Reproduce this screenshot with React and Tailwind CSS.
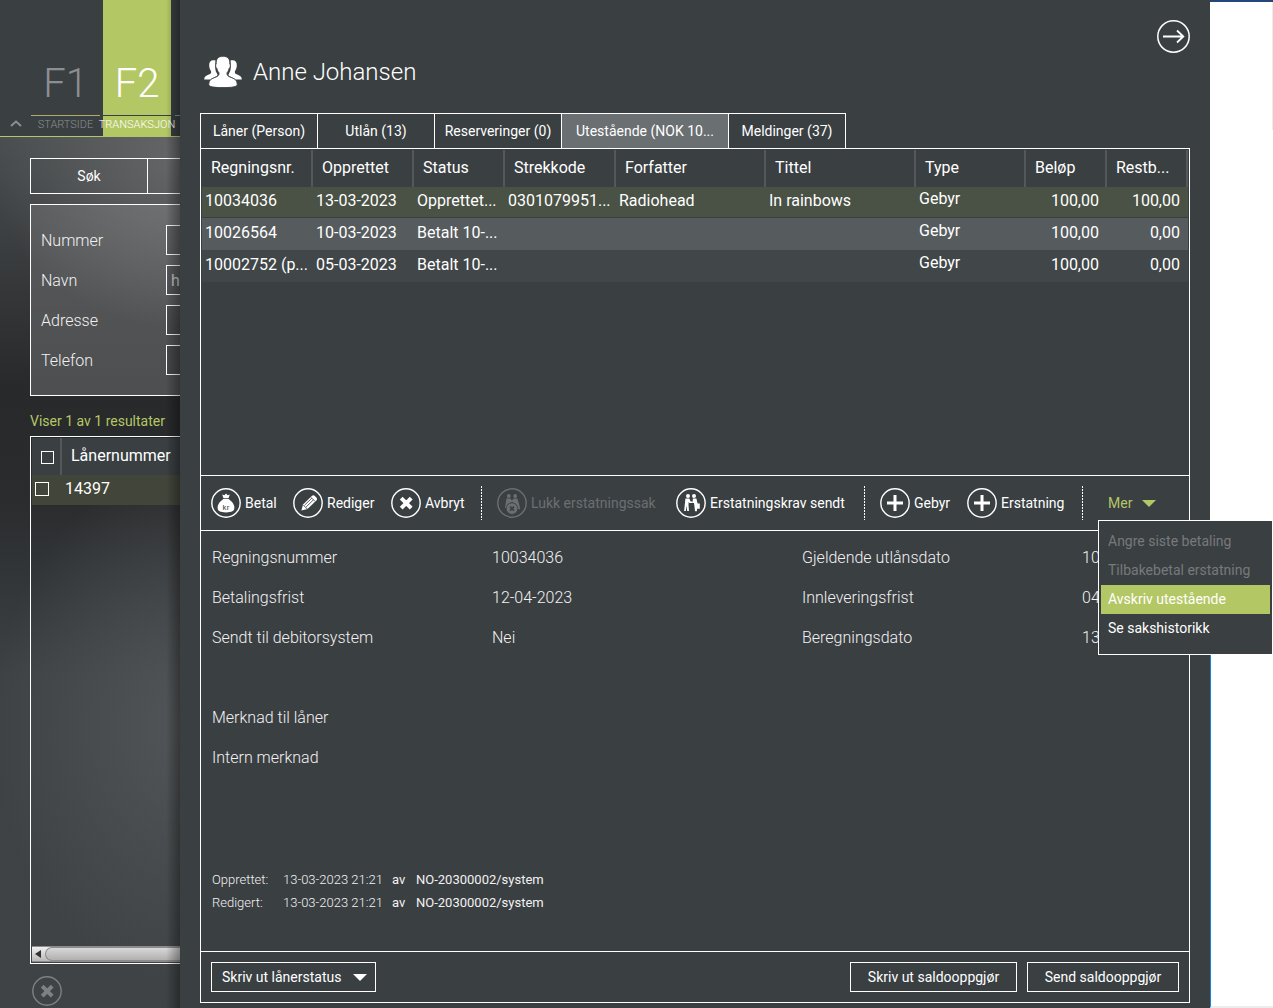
import { useState } from 'react';

const TABS = [
  { id: 'patron', label: 'Låner (Person)', width: 'w-[118px]' },
  { id: 'loans', label: 'Utlån (13)', width: 'w-[118px]' },
  { id: 'reservations', label: 'Reserveringer (0)', width: 'w-[128px]' },
  { id: 'debts', label: 'Utestående (NOK 10...', width: 'w-[168px]' },
  { id: 'messages', label: 'Meldinger (37)', width: 'w-[118px]' },
];

const COLUMNS = [
  { label: 'Regningsnr.', width: 'w-[111px]' },
  { label: 'Opprettet', width: 'w-[101px]' },
  { label: 'Status', width: 'w-[91px]' },
  { label: 'Strekkode', width: 'w-[111px]' },
  { label: 'Forfatter', width: 'w-[150px]' },
  { label: 'Tittel', width: 'w-[150px]' },
  { label: 'Type', width: 'w-[110px]' },
  { label: 'Beløp', width: 'w-[81px]' },
  { label: 'Restb...', width: 'w-[81px]' },
];

const BILLS = [
  {
    id: '10034036',
    cells: ['13-03-2023', 'Opprettet...', '0301079951...', 'Radiohead', 'In rainbows'],
    amount: '100,00',
    rest: '100,00',
    row: 'h-[31px] bg-[#4a5145] [&>td]:border-b [&>td]:border-[#3a3f42]',
  },
  {
    id: '10026564',
    cells: ['10-03-2023', 'Betalt 10-...', '', '', ''],
    amount: '100,00',
    rest: '0,00',
    row: 'h-8 bg-[#565b5e]',
  },
  {
    id: '10002752 (p...',
    cells: ['05-03-2023', 'Betalt 10-...', '', '', ''],
    amount: '100,00',
    rest: '0,00',
    row: 'h-8 bg-[#414648]',
  },
];

const DETAILS = [
  ['Regningsnummer', '10034036', 'Gjeldende utlånsdato', '10'],
  ['Betalingsfrist', '12-04-2023', 'Innleveringsfrist', '04'],
  ['Sendt til debitorsystem', 'Nei', 'Beregningsdato', '13'],
  ['', '', '', ''],
  ['Merknad til låner', '', '', ''],
  ['Intern merknad', '', '', ''],
];

const MENU = [
  { label: 'Angre siste betaling', disabled: true },
  { label: 'Tilbakebetal erstatning', disabled: true },
  { label: 'Avskriv utestående', active: true },
  { label: 'Se sakshistorikk' },
];

const SEARCH_FIELDS = [
  { id: 'nummer', label: 'Nummer', value: '' },
  { id: 'navn', label: 'Navn', value: 'h' },
  { id: 'adresse', label: 'Adresse', value: '' },
  { id: 'telefon', label: 'Telefon', value: '' },
];

function CircleIcon({ children }) {
  return (
    <svg viewBox="0 0 30 30" className="h-[30px] w-[30px] shrink-0" fill="currentColor" aria-hidden="true">
      <circle cx="15" cy="15" r="14.2" fill="none" stroke="currentColor" strokeWidth="1.4" />
      {children}
    </svg>
  );
}

function MoneyBagIcon() {
  return (
    <CircleIcon>
      <path d="M11.2 6.4l2.200.8L15 5.400l1.600 1.800 2.200-.8-1.300 3.800h-5z" />
      <path d="M12.4 11h5.200c2.600 2 5.800 4.800 5.800 8.600 0 3.200-2.200 4.800-8.400 4.800s-8.400-1.600-8.400-4.800c0-3.800 3.200-6.600 5.800-8.600z" />
      <text x="15" y="22" fontSize="8" fontFamily="Roboto, sans-serif" textAnchor="middle" fill="#3a3f42">
        kr
      </text>
    </CircleIcon>
  );
}

function PencilIcon() {
  return (
    <CircleIcon>
      <path d="M8.400 22.600l1.600-6 8.800-8.600c1-.9 2.200-.8 3.100 0l1.500 1.500c.8.900.8 2 0 2.900l-8.900 8.700z" />
      <path d="M11.600 17.200l7.200-7M13.200 18.900l7.400-7.200" stroke="#3a3f42" strokeWidth=".8" fill="none" />
      <path d="M17.900 9.300l4.200 4.200M10.300 17l4 4" stroke="#3a3f42" strokeWidth=".8" fill="none" />
    </CircleIcon>
  );
}

function CrossIcon() {
  return (
    <CircleIcon>
      <path d="M10.200 10.200l10 10M20.200 10.200l-10 10" stroke="currentColor" strokeWidth="4" fill="none" />
    </CircleIcon>
  );
}

function PlusIcon() {
  return (
    <CircleIcon>
      <path d="M15 7v16M7 15h16" stroke="currentColor" strokeWidth="3" fill="none" />
    </CircleIcon>
  );
}

function CloseCaseIcon() {
  return (
    <CircleIcon>
      <circle cx="11.800" cy="8" r="1.900" />
      <circle cx="18.200" cy="8" r="1.900" />
      <path d="M9.400 10.600h4l1.600 2 1.600-2h3.800l1.600 5 1.200 5.400-2.200.6-1.600-5.200-4.400-2.400-4.400 2.400-.6 3.600H8z" />
      <circle cx="15" cy="20.600" r="5.800" stroke="#3a3f42" strokeWidth=".8" />
      <path d="M13 18.600l4 4M17 18.600l-4 4" stroke="#3a3f42" strokeWidth="1.800" fill="none" />
    </CircleIcon>
  );
}

function HandshakeIcon() {
  return (
    <CircleIcon>
      <circle cx="12" cy="8" r="2" />
      <circle cx="18" cy="8" r="2" />
      <path d="M9.400 10.400h4l1.200 3.200h1.600v1.400h-2.800l-.7-1.200-.2 3 .5 6.200h-1.800l-.9-5.400-.4 5.400H8.100l.8-7.600z" />
      <path d="M16.800 10.400h3.600l1.200 5h2.200v5.400h-2.700l-.2 2.400H19l-.5-4.600-.5-3.600h-1.800v-1.400h.6z" />
    </CircleIcon>
  );
}

function PeopleIcon() {
  return (
    <svg viewBox="0 0 38 32" className="h-8 w-[38px]" fill="currentColor" aria-hidden="true">
      <path d="M11.500 4.600C7 3.600 5 5.800 5.200 9.400c.1 2.600.8 4.200 1.800 5.600.6 1.800-.2 2.800-2.200 3.600C1.600 19.800.2 20.800.2 23.600h6.400c1.400-1.600 4-2.400 6-3.400 1.200-.8 1-1.800.4-2.800-2-2.400-2-6-1.500-12.800z" />
      <path d="M26.500 4.600c4.500-1 6.500 1.200 6.300 4.800-.1 2.600-.8 4.200-1.800 5.600-.6 1.800.2 2.800 2.200 3.600 3.200 1.200 4.600 2.200 4.600 5h-6.400c-1.400-1.600-4-2.400-6-3.400-1.200-.8-1-1.800-.4-2.800 2-2.400 2-6 1.500-12.800z" />
      <path
        d="M19 .2c4.800 0 7.200 3 6.800 7.800 1 .6.700 3.600-.7 4.400-.4 2-1.100 3.200-2 4.200-.4 2.400.3 3.400 2.900 4.400 4.800 1.800 7.200 3 7.200 7.600 0 2.200-4.800 3-14.200 3s-14.200-.8-14.200-3c0-4.600 2.400-5.800 7.200-7.600 2.600-1 3.300-2 2.900-4.400-.9-1-1.600-2.200-2-4.200-1.400-.8-1.700-3.800-.7-4.400C11.800 3.200 14.200.2 19 .2z"
        stroke="#3a3f42"
        strokeWidth=".9"
      />
    </svg>
  );
}

function Triangle() {
  return (
    <svg viewBox="0 0 14 7" className="h-[7px] w-[14px]" fill="currentColor" aria-hidden="true">
      <path d="M0 0h14L7 7z" />
    </svg>
  );
}

function ToolButton({ icon, label, width, disabled }) {
  return (
    <button
      type="button"
      disabled={disabled}
      className={`flex shrink-0 items-center gap-1 whitespace-nowrap text-white disabled:text-[#6b6f72] ${width}`}
    >
      {icon}
      {label}
    </button>
  );
}

function ToolDivider() {
  return (
    <div className="h-[34px] w-px shrink-0 bg-[repeating-linear-gradient(to_bottom,white_0,white_2px,transparent_2px,transparent_3px)]" />
  );
}

function FunctionKeys() {
  return (
    <nav className="flex h-[137px] items-end border-b border-[#b4c765] bg-[#3a3f42] font-light">
      <button type="button" aria-label="Skjul meny" className="flex h-[25px] w-[31px] shrink-0 items-center justify-center text-[#8c8f91]">
        <svg viewBox="0 0 12 7" className="h-[7px] w-3" fill="none" stroke="currentColor" strokeWidth="2" aria-hidden="true">
          <path d="M1 6l5-4.500L11 6" />
        </svg>
      </button>
      <a href="#startside" className="flex w-[69px] shrink-0 flex-col items-center text-[#8c8f91]">
        <span className="text-[40px] leading-[62px]">F1</span>
        <span className="h-[21px] w-full border-t border-[#b5a96a] text-center text-[11px] leading-[17px]">STARTSIDE</span>
      </a>
      <a href="#transaksjon" className="ml-[3px] flex h-full w-[68px] shrink-0 flex-col items-center justify-end bg-[#b4c765] text-white">
        <span className="text-[40px] leading-[62px]">F2</span>
        <span className="flex h-[21px] w-full justify-center border-t border-[#3a3f42] text-[11px] leading-[17px]">TRANSAKSJON</span>
      </a>
      <div className="ml-1 h-[21px] flex-1 border-t border-[#6fa0a0]" />
    </nav>
  );
}

function SearchPanel() {
  return (
    <aside className="relative flex w-[180px] shrink-0 flex-col overflow-hidden">
      <FunctionKeys />
      <div className="flex flex-1 flex-col bg-[radial-gradient(ellipse_190px_170px_at_180px_20px,#646668,transparent),radial-gradient(ellipse_190px_260px_at_185px_590px,#525557,transparent),linear-gradient(#4a4d4f_0%,#27292b_29%,#2a2c2e_42%,#3e4245_62%,#3f4345_100%)] pt-[21px] pl-[30px]">
        <div className="flex h-9 shrink-0 border border-r-0 border-white text-sm text-white">
          <button type="button" className="w-[117px] border-r border-white">
            Søk
          </button>
          <button type="button" aria-label="Nullstill" className="flex-1" />
        </div>

        <form className="mt-[10px] flex h-48 shrink-0 flex-col gap-[10px] border border-r-0 border-white bg-linear-to-b from-white/12 to-white/18 pt-5 pl-[10px] font-light text-[#f2f2f2]">
          {SEARCH_FIELDS.map((field) => (
            <div key={field.id} className="flex h-[30px] items-center">
              <label htmlFor={field.id} className="w-[125px] shrink-0 pt-[2px]">
                {field.label}
              </label>
              <input
                id={field.id}
                defaultValue={field.value}
                className="h-[30px] w-[180px] shrink-0 border border-white bg-black/10 px-1 font-normal text-[#c5c7c8]"
              />
            </div>
          ))}
        </form>

        <p className="mt-[15px] text-sm text-[#b4c765]">Viser 1 av 1 resultater</p>

        <div className="mt-[5px] flex flex-1 flex-col border border-r-0 border-white pt-px pl-px text-white">
          <table className="w-full table-fixed border-separate border-spacing-0 text-left">
            <thead>
              <tr className="h-[37px] bg-[#3a3f42]">
                <th className="w-[30px] border-r-2 border-[#54585b] pt-[2px] pl-[9px]">
                  <input
                    type="checkbox"
                    aria-label="Velg alle"
                    className="block h-[13px] w-[13px] appearance-none border border-white"
                  />
                </th>
                <th className="pb-[2px] pl-[9px] font-normal">Lånernummer</th>
              </tr>
            </thead>
            <tbody>
              <tr className="h-[30px] bg-[#42463a]">
                <td className="pb-[2px] pl-[3px]">
                  <input
                    id="row-14397"
                    type="checkbox"
                    className="block h-[14px] w-[14px] appearance-none border border-white"
                  />
                </td>
                <td className="pb-[2px] pl-[3px]">
                  <label htmlFor="row-14397">14397</label>
                </td>
              </tr>
            </tbody>
          </table>
          <div className="mt-auto mb-px flex h-4 items-center border-y border-[#8c8c8c] bg-linear-to-b from-[#f0f0f0] to-[#b8b8b8] pl-[3px]">
            <svg viewBox="0 0 6 8" className="h-2 w-[6px]" fill="#333" aria-hidden="true">
              <path d="M6 0v8L0 4z" />
            </svg>
            <div className="ml-1 h-[14px] flex-1 rounded-l-full border border-r-0 border-[#8c8c8c] bg-linear-to-b from-[#d8d8d8] to-[#b0b0b0]" />
          </div>
        </div>

        <button type="button" aria-label="Lukk" className="mt-3 mb-[2px] ml-[2px] w-[30px] text-[#7e8182]">
          <CrossIcon />
        </button>
      </div>
      <div className="pointer-events-none absolute inset-y-0 right-0 w-[14px] bg-linear-to-r from-transparent to-black/35" />
    </aside>
  );
}

function BillTable() {
  return (
    <div className="min-h-[327px] border-b border-white p-px">
      <table className="w-full table-fixed border-separate border-spacing-0 text-left leading-5 whitespace-nowrap">
        <thead>
          <tr className="h-[37px]">
            {COLUMNS.map((col) => (
              <th key={col.label} className={`${col.width} border-r-2 border-[#54585b] pb-[2px] pl-[9px] font-normal`}>
                {col.label}
              </th>
            ))}
          </tr>
        </thead>
        <tbody>
          {BILLS.map((bill) => (
            <tr key={bill.id} className={bill.row}>
              <td className="pb-[2px] pl-[3px]">{bill.id}</td>
              {bill.cells.map((cell, i) => (
                <td key={i} className="pb-[2px] pl-[3px]">
                  {cell}
                </td>
              ))}
              <td className="pb-[6px] pl-[3px]">Gebyr</td>
              <td className="pr-2 pb-[2px] text-right">{bill.amount}</td>
              <td className="pr-2 pb-[2px] text-right">{bill.rest}</td>
            </tr>
          ))}
        </tbody>
      </table>
    </div>
  );
}

function MoreMenu() {
  const [open, setOpen] = useState(true);

  return (
    <div className="relative ml-[10px]">
      <button
        type="button"
        aria-expanded={open}
        onClick={() => setOpen(!open)}
        className="flex h-[30px] items-center gap-[10px] text-[#b4c765]"
      >
        Mer
        <Triangle />
      </button>
      {open && (
        <ul className="absolute top-8 -left-[10px] z-10 w-[174px] border border-r-0 border-white bg-[#3a3f42] px-[2px] pt-[6px] pb-[11px]">
          {MENU.map((item) => (
            <li key={item.label}>
              <button
                type="button"
                disabled={item.disabled}
                className={`block h-[29px] w-full pb-[2px] pl-[7px] text-left whitespace-nowrap text-white disabled:text-[#77797b] ${
                  item.active ? 'bg-[#b4c765]' : ''
                }`}
              >
                {item.label}
              </button>
            </li>
          ))}
        </ul>
      )}
    </div>
  );
}

function Toolbar() {
  return (
    <div className="flex h-[55px] shrink-0 items-center gap-[15px] border-b border-white pl-[10px] text-sm">
      <ToolButton icon={<MoneyBagIcon />} label="Betal" width="w-[67px]" />
      <ToolButton icon={<PencilIcon />} label="Rediger" width="w-[83px]" />
      <ToolButton icon={<CrossIcon />} label="Avbryt" width="w-[75px]" />
      <ToolDivider />
      <ToolButton icon={<CloseCaseIcon />} label="Lukk erstatningssak" width="w-[164px]" disabled />
      <ToolButton icon={<HandshakeIcon />} label="Erstatningskrav sendt" width="w-[173px]" />
      <ToolDivider />
      <ToolButton icon={<PlusIcon />} label="Gebyr" width="w-[72px]" />
      <ToolButton icon={<PlusIcon />} label="Erstatning" width="w-[100px]" />
      <ToolDivider />
      <MoreMenu />
    </div>
  );
}

function AuditLine({ label }) {
  return (
    <p className="flex h-[23px] items-center">
      <span className="w-[71px]">{label}</span>
      <span className="w-[109px]">13-03-2023 21:21</span>
      <span className="w-6 font-normal">av</span>
      <span className="font-normal">NO-20300002/system</span>
    </p>
  );
}

function BillDetails() {
  return (
    <section className="flex flex-1 flex-col border-b border-white pt-[7px] pb-[37px] pl-[11px] font-light text-[#f2f2f2]">
      {DETAILS.map(([label, value, dateLabel, date], i) => (
        <div key={i} className="flex h-10 items-center whitespace-nowrap">
          <span className="w-[280px] shrink-0">{label}</span>
          <span className="w-[310px] shrink-0">{value}</span>
          <span className="w-[280px] shrink-0">{dateLabel}</span>
          <span className="w-4">{date}</span>
        </div>
      ))}
      <div className="mt-auto text-[13px]">
        <AuditLine label="Opprettet:" />
        <AuditLine label="Redigert:" />
      </div>
    </section>
  );
}

function PatronDialog() {
  const [tab, setTab] = useState('debts');

  return (
    <main className="flex min-w-0 flex-1 flex-col bg-[#3a3f42] px-5 pb-[5px]">
      <header className="flex h-[113px] shrink-0 justify-between">
        <div className="flex items-center gap-[11px] pt-[30px] pl-1">
          <PeopleIcon />
          <h1 className="text-2xl font-light">Anne Johansen</h1>
        </div>
        <button type="button" aria-label="Lukk panel" className="mt-5 h-[33px] w-[33px]">
          <svg viewBox="0 0 33 33" fill="none" stroke="currentColor" aria-hidden="true">
            <circle cx="16.500" cy="16.500" r="15.700" strokeWidth="1.500" />
            <path d="M6 16.500h20M20 10.500l6.300 6L20 22.500" strokeWidth="1.800" />
          </svg>
        </button>
      </header>

      <div role="tablist" className="flex h-[35px] shrink-0 text-sm">
        {TABS.map((t) => (
          <button
            key={t.id}
            type="button"
            role="tab"
            aria-selected={tab === t.id}
            onClick={() => setTab(t.id)}
            className={`-mr-px border border-b-0 border-white whitespace-nowrap ${t.width} ${
              tab === t.id ? 'bg-[#6a6f72]' : ''
            }`}
          >
            {t.label}
          </button>
        ))}
      </div>

      <div className="flex flex-1 flex-col border border-white">
        <BillTable />
        <Toolbar />
        <BillDetails />
        <footer className="flex h-[50px] shrink-0 items-center gap-[10px] px-[10px] text-sm">
          <button
            type="button"
            className="mr-auto flex h-[30px] w-[165px] items-center justify-between border border-white pr-2 pl-[10px]"
          >
            Skriv ut lånerstatus
            <Triangle />
          </button>
          <button type="button" className="h-[30px] w-[167px] border border-white">
            Skriv ut saldooppgjør
          </button>
          <button type="button" className="h-[30px] w-[152px] border border-white">
            Send saldooppgjør
          </button>
        </footer>
      </div>
    </main>
  );
}

export default function App() {
  return (
    <div className="flex min-h-screen bg-white font-[Roboto,sans-serif] text-base text-white">
      <SearchPanel />
      <PatronDialog />
      {/* Edge of the window behind the dialog */}
      <div className="flex w-[63px] shrink-0 flex-col bg-white">
        <div className="h-[2px] bg-[#27457d]" />
        <div className="h-[128px] border-r border-[#ececec]" />
        <div className="h-[525px]" />
        <div className="flex-1 border-b-2 border-l border-b-[#ececec] border-l-[#1883d7]" />
      </div>
    </div>
  );
}
